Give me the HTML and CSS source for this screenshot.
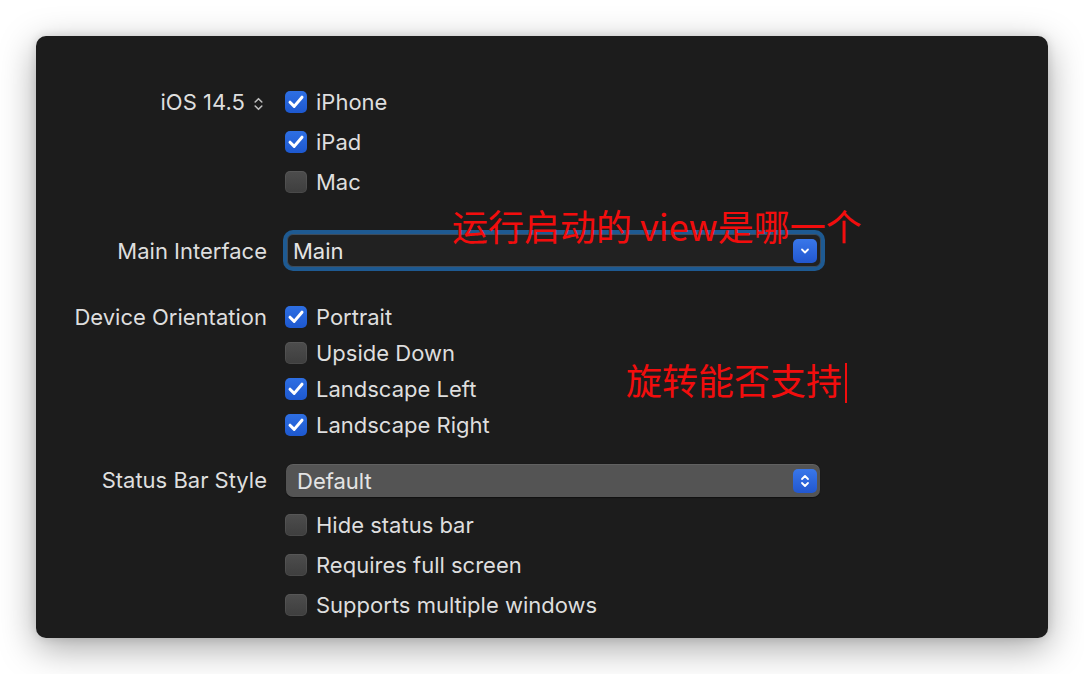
FILE: index.html
```html
<!DOCTYPE html>
<html>
<head>
<meta charset="utf-8">
<link rel="stylesheet" href="styles.css">
</head>
<body>
<div class="panel">
  <section class="sec sec-devices">
    <div class="label label-ios">iOS 14.5
      <svg class="stepper" width="9" height="14" viewBox="0 0 9 14"><path d="M1.2 5 L4.5 1.7 L7.8 5 M1.2 9 L4.5 12.3 L7.8 9" fill="none" stroke="#bdbdbd" stroke-width="1.6" stroke-linecap="round" stroke-linejoin="round"/></svg>
    </div>
    <div class="controls">
      <div class="check-row"><span class="cb on"><svg viewBox="0 0 22 22"><path d="M5 11.2 L9.2 15.4 L17 6.2" /></svg></span>iPhone</div>
      <div class="check-row"><span class="cb on"><svg viewBox="0 0 22 22"><path d="M5 11.2 L9.2 15.4 L17 6.2" /></svg></span>iPad</div>
      <div class="check-row"><span class="cb"></span>Mac</div>
    </div>
  </section>

  <section class="sec sec-main">
    <div class="label">Main Interface</div>
    <div class="controls">
      <div class="popup focused">
        <span class="popup-text">Main</span>
        <span class="popup-btn"><svg width="12" height="8" viewBox="0 0 12 8"><path d="M3 2.5 L6 5.5 L9 2.5" fill="none" stroke="#fff" stroke-width="1.8" stroke-linecap="round" stroke-linejoin="round"/></svg></span>
      </div>
    </div>
  </section>

  <section class="sec sec-orient">
    <div class="label">Device Orientation</div>
    <div class="controls">
      <div class="check-row"><span class="cb on"><svg viewBox="0 0 22 22"><path d="M5 11.2 L9.2 15.4 L17 6.2" /></svg></span>Portrait</div>
      <div class="check-row"><span class="cb"></span>Upside Down</div>
      <div class="check-row"><span class="cb on"><svg viewBox="0 0 22 22"><path d="M5 11.2 L9.2 15.4 L17 6.2" /></svg></span>Landscape Left</div>
      <div class="check-row"><span class="cb on"><svg viewBox="0 0 22 22"><path d="M5 11.2 L9.2 15.4 L17 6.2" /></svg></span>Landscape Right</div>
    </div>
  </section>

  <section class="sec sec-status">
    <div class="label">Status Bar Style</div>
    <div class="controls">
      <div class="popup gray">
        <span class="popup-text">Default</span>
        <span class="popup-btn"><svg width="12" height="16" viewBox="0 0 12 16"><path d="M3 6 L6 3 L9 6 M3 10 L6 13 L9 10" fill="none" stroke="#fff" stroke-width="1.8" stroke-linecap="round" stroke-linejoin="round"/></svg></span>
      </div>
    </div>
  </section>

  <section class="sec sec-statusopts">
    <div class="label"></div>
    <div class="controls">
      <div class="check-row"><span class="cb"></span>Hide status bar</div>
      <div class="check-row"><span class="cb"></span>Requires full screen</div>
      <div class="check-row"><span class="cb"></span>Supports multiple windows</div>
    </div>
  </section>

  <div class="note note-1">运行启动的 view是哪一个</div>
  <div class="note note-2">旋转能否支持<span class="caret"></span></div>
</div>
</body>
</html>
```

FILE: styles.css
```css
html, body {
  margin: 0;
  padding: 0;
  background: #ffffff;
}
body {
  width: 1084px;
  height: 674px;
  overflow: hidden;
  font-family: Inter, "Noto Sans", "Liberation Sans", sans-serif;
}
.panel {
  position: relative;
  box-sizing: border-box;
  margin: 36px 0 0 36px;
  width: 1012px;
  height: 602px;
  background: #1c1c1c;
  border-radius: 10px;
  box-shadow: 0 10px 36px rgba(0, 0, 0, 0.35), 0 0 10px rgba(0,0,0,0.12);
  padding-top: 46px;
  color: #dedede;
  font-size: 22px;
}
.sec {
  display: grid;
  grid-template-columns: 231px 540px;
  column-gap: 18px;
}
.label {
  text-align: right;
  white-space: nowrap;
}
.label-ios {
  padding-right: 4px;
}
.controls {
  display: flex;
  flex-direction: column;
}
.check-row {
  display: flex;
  align-items: center;
  white-space: nowrap;
}
.sec-devices .label,
.sec-devices .check-row,
.sec-statusopts .check-row { height: 40px; line-height: 40px; }
.sec-orient .label,
.sec-orient .check-row { height: 36px; line-height: 36px; }

.stepper {
  margin-left: 3px;
  vertical-align: -1px;
}

.cb {
  box-sizing: border-box;
  flex: none;
  width: 22px;
  height: 22px;
  border-radius: 5px;
  margin-right: 9px;
  background: linear-gradient(#4d4d4d, #3e3e3e);
  box-shadow: inset 0 0 0 1px rgba(255,255,255,0.06);
  display: flex;
  align-items: center;
  justify-content: center;
}
.cb.on {
  background: linear-gradient(#2e6fe3, #1d58cf);
  box-shadow: none;
}
.cb svg {
  width: 22px;
  height: 22px;
}
.cb svg path {
  fill: none;
  stroke: #ffffff;
  stroke-width: 3;
  stroke-linecap: round;
  stroke-linejoin: round;
}

.sec-main {
  margin-top: 32px;
}
.sec-main .label {
  line-height: 33px;
  padding-top: 1px;
}
.popup {
  box-sizing: border-box;
  width: 534px;
  height: 33px;
  display: flex;
  align-items: center;
  justify-content: space-between;
  border-radius: 6px;
  padding-right: 3px;
}
.popup.focused {
  margin-left: 2px;
  background: #212121;
  border: 1px solid #3d4c5c;
  box-shadow: 0 0 0 4px #1e5a92;
  padding-left: 5px;
}
.popup.gray {
  margin-left: 1px;
  background: #545454;
  box-shadow: 0 0.5px 1px rgba(0,0,0,0.4), inset 0 1px 0 rgba(255,255,255,0.08);
  padding-left: 11px;
  border-radius: 7px;
}
.popup-text {
  color: #e4e4e4;
}
.popup-btn {
  width: 24px;
  height: 24px;
  border-radius: 5px;
  background: linear-gradient(#3977ea, #2257cf);
  display: flex;
  align-items: center;
  justify-content: center;
}

.sec-orient {
  margin-top: 31px;
}
.sec-status {
  margin-top: 21px;
}
.sec-status .label {
  line-height: 33px;
}
.sec-statusopts {
  margin-top: 8px;
}

.note {
  position: absolute;
  color: #f20d0d;
  font-family: "Noto Sans CJK SC", "Noto Sans", sans-serif;
  font-size: 36px;
  line-height: 36px;
  white-space: nowrap;
}
.note-1 {
  left: 416px;
  top: 171px;
}
.note-2 {
  left: 590px;
  top: 325px;
}
.caret {
  display: inline-block;
  width: 2px;
  height: 40px;
  background: #f20d0d;
  margin-left: 3px;
  vertical-align: -8px;
}
```
